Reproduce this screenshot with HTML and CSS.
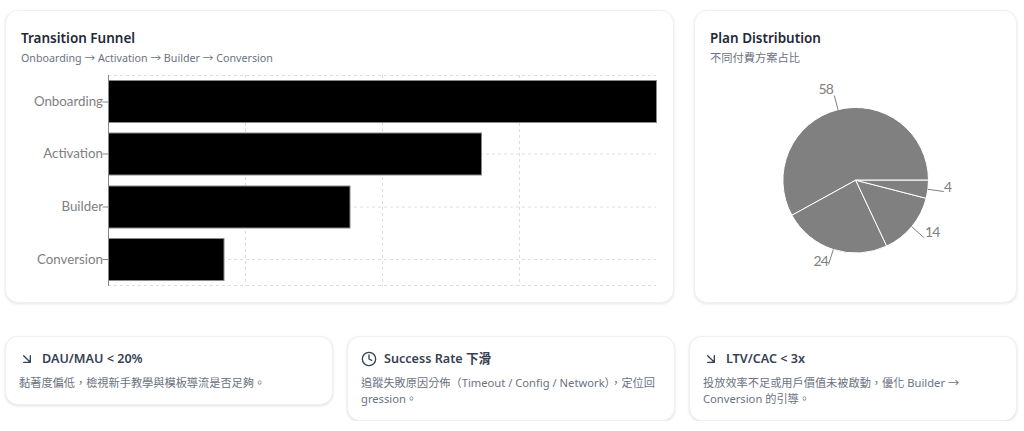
FILE: index.html
```html
<!DOCTYPE html>
<html lang="zh-Hant">
<head>
<meta charset="utf-8">
<title>Dashboard</title>
<link rel="stylesheet" href="styles.css">
</head>
<body>
<main class="page">
  <section class="charts">
    <article class="card">
      <h2 class="card-title">Transition Funnel</h2>
      <p class="card-sub">Onboarding → Activation → Builder → Conversion</p>
      <svg class="chart" width="637" height="217" viewBox="21 74 637 217">
        <g class="grid">
          <path d="M108 75.5H656M108 154H656M108 207H656M108 259.5H656M108 285.5H656"/>
          <path d="M245.5 75V286M382.5 75V286M519.5 75V286"/>
        </g>
        <g class="bars">
          <rect x="108.5" y="80.5" width="548" height="42"/>
          <rect x="108.5" y="133" width="373" height="42"/>
          <rect x="108.5" y="186" width="241.5" height="42"/>
          <rect x="108.5" y="238.5" width="115.5" height="42"/>
        </g>
        <path class="axis" d="M108.5 75V286M102.5 102H108.5M102.5 154H108.5M102.5 207H108.5M102.5 259.5H108.5"/>
        <g class="tick-labels">
          <text x="103" y="106">Onboarding</text>
          <text x="103" y="158">Activation</text>
          <text x="103" y="211">Builder</text>
          <text x="103" y="264">Conversion</text>
        </g>
      </svg>
    </article>
    <article class="card">
      <h2 class="card-title">Plan Distribution</h2>
      <p class="card-sub card-sub-cjk">不同付費方案占比</p>
      <svg class="chart" width="291" height="217" viewBox="710 74 291 217">
        <g class="slices">
          <path d="M855.7 180.2L928.5 180.2A72.8 72.8 0 1 0 791.9 215.3Z"/>
          <path d="M855.7 180.2L791.9 215.3A72.8 72.8 0 0 0 886.7 246.1Z"/>
          <path d="M855.7 180.2L886.7 246.1A72.8 72.8 0 0 0 926.2 198.3Z"/>
          <path d="M855.7 180.2L926.2 198.3A72.8 72.8 0 0 0 928.5 180.2Z"/>
        </g>
        <path class="leaders" d="M838 109.8L834.3 95.5M833.3 249.5L828.5 264.5M911.8 226.8L923.8 237.5M927.9 189.3L943.8 191.5"/>
        <g class="pie-labels">
          <text class="end" x="833" y="94">58</text>
          <text class="end" x="828" y="266">24</text>
          <text x="925" y="237">14</text>
          <text x="944" y="192">4</text>
        </g>
      </svg>
    </article>
  </section>
  <section class="notes">
    <article class="note">
      <h3 class="note-title">
        <svg class="icon" viewBox="0 0 24 24"><path d="M7 7l10 10M17 7v10H7"/></svg>
        DAU/MAU &lt; 20%
      </h3>
      <p class="note-text">黏著度偏低，檢視新手教學與模板導流是否足夠。</p>
    </article>
    <article class="note">
      <h3 class="note-title">
        <svg class="icon" viewBox="0 0 24 24"><circle cx="12" cy="12" r="10"/><path d="M12 6v6l4 2"/></svg>
        Success Rate 下滑
      </h3>
      <p class="note-text">追蹤失敗原因分佈（Timeout / Config / Network），定位回gression。</p>
    </article>
    <article class="note">
      <h3 class="note-title">
        <svg class="icon" viewBox="0 0 24 24"><path d="M7 7l10 10M17 7v10H7"/></svg>
        LTV/CAC &lt; 3x
      </h3>
      <p class="note-text">投放效率不足或用戶價值未被啟動，優化 Builder → Conversion 的引導。</p>
    </article>
  </section>
</main>
</body>
</html>
```
FILE: styles.css
```css
* { box-sizing: border-box; }
html, body { margin: 0; padding: 0; background: #fff; overflow: hidden; }
body {
  font-family: "Noto Sans", "Noto Sans CJK TC", sans-serif;
  color: #1f2937;
}
.page { padding: 10px 7px 0 5px; }
.charts {
  display: grid;
  grid-template-columns: 669px 323px;
  column-gap: 20px;
}
.card {
  height: 293px;
  padding: 16px 15px 0 15px;
  background: #fff;
  border: 1px solid #eef0f3;
  border-radius: 13px;
  box-shadow: 0 1px 3px rgba(0, 0, 0, .1);
}
.card-title {
  margin: 0;
  font-size: 13.5px;
  line-height: 22px;
  font-weight: 600;
  color: #1f2937;
}
.card-sub {
  margin: 0;
  font-size: 10.7px;
  line-height: 18px;
  color: #6b7280;
}
.card-sub-cjk { font-size: 11.25px; }
.chart { display: block; margin-top: 7px; overflow: visible; }
.grid path { fill: none; stroke: #ddd; stroke-width: 1; stroke-dasharray: 3 3; }
.bars rect { fill: #000; stroke: #888; stroke-width: 1; }
.axis { fill: none; stroke: #888; stroke-width: 1; }
.tick-labels text { font-family: Lato, sans-serif; font-size: 13.3px; fill: #808080; text-anchor: end; }
.slices path { fill: #808080; stroke: #fff; stroke-width: 1; }
.leaders { fill: none; stroke: #808080; stroke-width: 1; }
.pie-labels text { font-family: Lato, sans-serif; font-size: 14px; letter-spacing: -.9px; fill: #808080; }
.pie-labels .end { text-anchor: end; }
.notes {
  display: grid;
  grid-template-columns: repeat(3, 328px);
  column-gap: 14px;
  align-items: start;
  margin-top: 33px;
}
.note {
  padding: 12px 12px 13px 13px;
  background: #fff;
  border: 1px solid #eef0f3;
  border-radius: 13px;
  box-shadow: 0 1px 3px rgba(0, 0, 0, .12);
}
.note-title {
  display: flex;
  align-items: center;
  gap: 7px;
  margin: 0;
  font-size: 12.6px;
  line-height: 20px;
  font-weight: 600;
  color: #374151;
}
.icon {
  width: 16px;
  height: 16px;
  flex: none;
  fill: none;
  stroke: #374151;
  stroke-width: 2;
  stroke-linecap: round;
  stroke-linejoin: round;
}
.note-text {
  margin: 6px 0 0;
  font-size: 11.2px;
  line-height: 16px;
  color: #6b7280;
}
```
